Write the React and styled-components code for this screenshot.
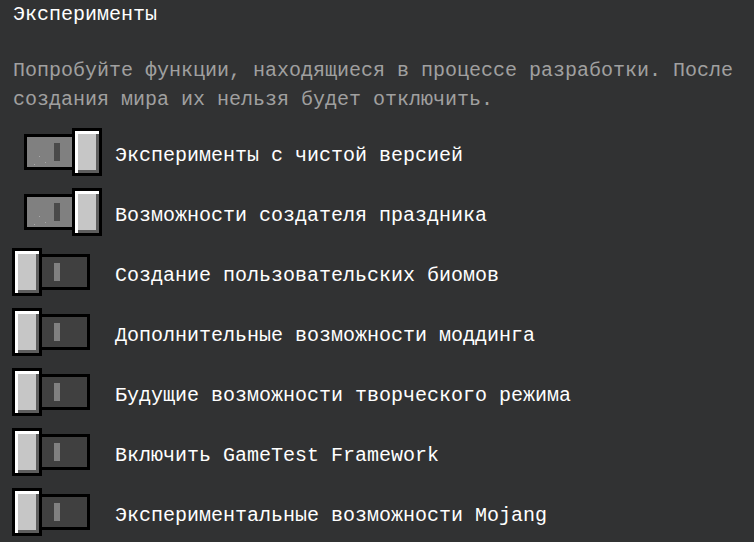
import React from "react";
import styled, { createGlobalStyle } from "styled-components";

const experiments = [
  { id: 1, title: "Эксперименты с чистой версией", enabled: true },
  { id: 2, title: "Возможности создателя праздника", enabled: true },
  { id: 3, title: "Создание пользовательских биомов", enabled: false },
  { id: 4, title: "Дополнительные возможности моддинга", enabled: false },
  { id: 5, title: "Будущие возможности творческого режима", enabled: false },
  { id: 6, title: "Включить GameTest Framework", enabled: false },
  { id: 7, title: "Экспериментальные возможности Mojang", enabled: false },
];

const GlobalStyle = createGlobalStyle`
  * {
    box-sizing: border-box;
  }

  html,
  body {
    margin: 0;
    padding: 0;
    background-color: #313233;
  }
`;

const Toggle = ({ enabled }) => (
  <Switch $on={enabled}>
    {enabled ? (
      <>
        <Track $on>
          <Notch $on />
        </Track>
        <Knob />
      </>
    ) : (
      <>
        <Knob />
        <Track>
          <Notch />
        </Track>
      </>
    )}
  </Switch>
);

const App = () => {
  return (
    <Page>
      <GlobalStyle />
      <Header>
        <Title>Эксперименты</Title>
        <Description>
          Попробуйте функции, находящиеся в процессе разработки. После создания
          мира их нельзя будет отключить.
        </Description>
      </Header>
      <List>
        {experiments.map((item) => (
          <Row key={item.id}>
            <Toggle enabled={item.enabled} />
            <Label>{item.title}</Label>
          </Row>
        ))}
      </List>
    </Page>
  );
};

const Page = styled.div`
  width: 754px;
  height: 542px;
  overflow: hidden;
  background-color: #313233;
  font-family: "Liberation Mono", "DejaVu Sans Mono", monospace;
  font-size: 20px;
  color: #ffffff;
`;

const Header = styled.div`
  padding: 1px 8px 0 13px;
`;

const Title = styled.h1`
  margin: 0;
  font-size: 20px;
  font-weight: 400;
  line-height: 28px;
  color: #ffffff;
`;

const Description = styled.p`
  margin: 27px 0 0;
  font-size: 20px;
  line-height: 29px;
  color: #a0a0a0;
`;

const List = styled.div`
  display: flex;
  flex-direction: column;
  margin-top: 8px;
  padding-left: 12px;
`;

const Row = styled.div`
  display: flex;
  align-items: center;
  height: 60px;
  gap: 13px;
`;

const Switch = styled.div`
  display: flex;
  align-items: center;
  justify-content: ${(p) => (p.$on ? "flex-end" : "flex-start")};
  width: 90px;
  height: 48px;
  flex-shrink: 0;
`;

const Knob = styled.div`
  width: 30px;
  height: 48px;
  flex-shrink: 0;
  border: 3px solid #000000;
  background-color: #c6c6c6;
  box-shadow: inset 3px 3px 0 #ffffff, inset -3px -3px 0 #5d5d5d;
`;

const Track = styled.div`
  position: relative;
  display: flex;
  align-items: center;
  justify-content: ${(p) => (p.$on ? "flex-end" : "flex-start")};
  width: 48px;
  height: 36px;
  padding: ${(p) => (p.$on ? "0 12px 0 0" : "0 0 0 12px")};
  border: 3px solid #000000;
  border-left-width: ${(p) => (p.$on ? "3px" : "0")};
  border-right-width: ${(p) => (p.$on ? "0" : "3px")};
  background-color: ${(p) => (p.$on ? "#808080" : "#404040")};

  ${(p) =>
    p.$on &&
    `
    &::before {
      content: "";
      position: absolute;
      left: 12px;
      top: 19px;
      width: 1px;
      height: 1px;
      background: #a8a8a8;
      box-shadow: -5px 8px 0 #a8a8a8, 6px 6px 0 #a8a8a8;
    }
  `}
`;

const Notch = styled.div`
  width: 6px;
  height: 18px;
  background-color: ${(p) => (p.$on ? "#4a4a4a" : "#808080")};
`;

const Label = styled.span`
  padding-top: 8px;
  font-size: 20px;
  line-height: 28px;
  color: #ffffff;
  white-space: nowrap;
`;

export default App;
